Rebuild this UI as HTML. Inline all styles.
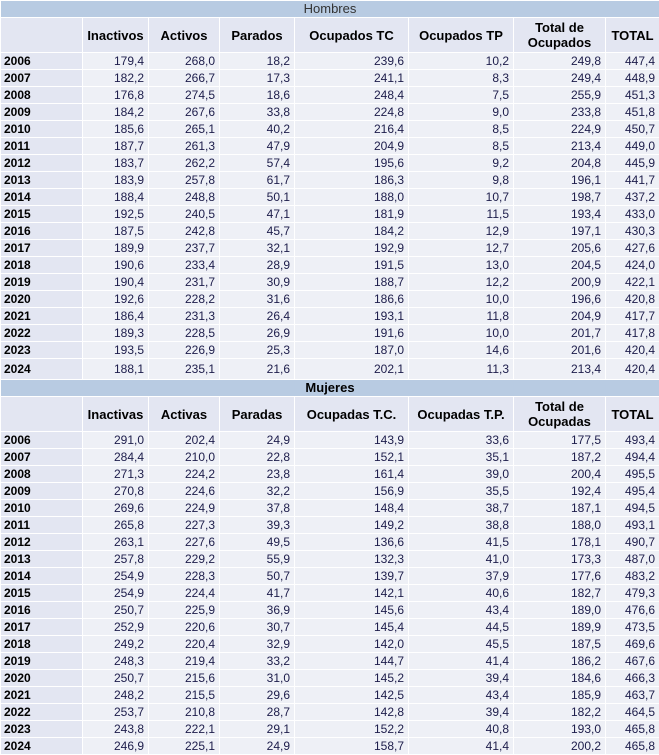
<!DOCTYPE html>
<html><head><meta charset="utf-8"><style>
body{margin:0;width:659px;height:755px;overflow:hidden;background:#fff;font-family:"Liberation Sans",Arial,sans-serif;font-size:12px}
table{border-collapse:collapse;table-layout:fixed;width:659px}
td{border:1px solid #fff;padding:0 4px 0 2px;height:16px;line-height:15px;background:#eef0f6;color:#1c1c4a;text-align:right;white-space:nowrap;overflow:hidden}
td.y{background:#e3e6f2;text-align:left;font-weight:bold;color:#000;padding-left:3px}
tr.h td{height:34px;background:#e3e6f2;text-align:center;font-weight:bold;color:#000;line-height:15px;padding:0 2px;font-size:13px}
tr.b td{height:16px;background:#b8cbe2;text-align:center;color:#333;padding:0;line-height:16px;font-size:13px}
tr.last td{height:18px;line-height:20px}
</style></head><body>
<table>
<colgroup><col style="width:82px"><col style="width:66px"><col style="width:71px"><col style="width:75px"><col style="width:114px"><col style="width:105px"><col style="width:92px"><col style="width:54px"></colgroup>
<tr class="b"><td colspan="8">Hombres</td></tr>
<tr class="h"><td></td><td>Inactivos</td><td>Activos</td><td>Parados</td><td>Ocupados TC</td><td>Ocupados TP</td><td>Total de<br>Ocupados</td><td>TOTAL</td></tr>
<tr><td class="y">2006</td><td>179,4</td><td>268,0</td><td>18,2</td><td>239,6</td><td>10,2</td><td>249,8</td><td>447,4</td></tr>
<tr><td class="y">2007</td><td>182,2</td><td>266,7</td><td>17,3</td><td>241,1</td><td>8,3</td><td>249,4</td><td>448,9</td></tr>
<tr><td class="y">2008</td><td>176,8</td><td>274,5</td><td>18,6</td><td>248,4</td><td>7,5</td><td>255,9</td><td>451,3</td></tr>
<tr><td class="y">2009</td><td>184,2</td><td>267,6</td><td>33,8</td><td>224,8</td><td>9,0</td><td>233,8</td><td>451,8</td></tr>
<tr><td class="y">2010</td><td>185,6</td><td>265,1</td><td>40,2</td><td>216,4</td><td>8,5</td><td>224,9</td><td>450,7</td></tr>
<tr><td class="y">2011</td><td>187,7</td><td>261,3</td><td>47,9</td><td>204,9</td><td>8,5</td><td>213,4</td><td>449,0</td></tr>
<tr><td class="y">2012</td><td>183,7</td><td>262,2</td><td>57,4</td><td>195,6</td><td>9,2</td><td>204,8</td><td>445,9</td></tr>
<tr><td class="y">2013</td><td>183,9</td><td>257,8</td><td>61,7</td><td>186,3</td><td>9,8</td><td>196,1</td><td>441,7</td></tr>
<tr><td class="y">2014</td><td>188,4</td><td>248,8</td><td>50,1</td><td>188,0</td><td>10,7</td><td>198,7</td><td>437,2</td></tr>
<tr><td class="y">2015</td><td>192,5</td><td>240,5</td><td>47,1</td><td>181,9</td><td>11,5</td><td>193,4</td><td>433,0</td></tr>
<tr><td class="y">2016</td><td>187,5</td><td>242,8</td><td>45,7</td><td>184,2</td><td>12,9</td><td>197,1</td><td>430,3</td></tr>
<tr><td class="y">2017</td><td>189,9</td><td>237,7</td><td>32,1</td><td>192,9</td><td>12,7</td><td>205,6</td><td>427,6</td></tr>
<tr><td class="y">2018</td><td>190,6</td><td>233,4</td><td>28,9</td><td>191,5</td><td>13,0</td><td>204,5</td><td>424,0</td></tr>
<tr><td class="y">2019</td><td>190,4</td><td>231,7</td><td>30,9</td><td>188,7</td><td>12,2</td><td>200,9</td><td>422,1</td></tr>
<tr><td class="y">2020</td><td>192,6</td><td>228,2</td><td>31,6</td><td>186,6</td><td>10,0</td><td>196,6</td><td>420,8</td></tr>
<tr><td class="y">2021</td><td>186,4</td><td>231,3</td><td>26,4</td><td>193,1</td><td>11,8</td><td>204,9</td><td>417,7</td></tr>
<tr><td class="y">2022</td><td>189,3</td><td>228,5</td><td>26,9</td><td>191,6</td><td>10,0</td><td>201,7</td><td>417,8</td></tr>
<tr><td class="y">2023</td><td>193,5</td><td>226,9</td><td>25,3</td><td>187,0</td><td>14,6</td><td>201,6</td><td>420,4</td></tr>
<tr class="last"><td class="y">2024</td><td>188,1</td><td>235,1</td><td>21,6</td><td>202,1</td><td>11,3</td><td>213,4</td><td>420,4</td></tr>
<tr class="b"><td colspan="8" style="font-weight:bold;color:#000">Mujeres</td></tr>
<tr class="h"><td></td><td>Inactivas</td><td>Activas</td><td>Paradas</td><td>Ocupadas T.C.</td><td>Ocupadas T.P.</td><td>Total de<br>Ocupadas</td><td>TOTAL</td></tr>
<tr><td class="y">2006</td><td>291,0</td><td>202,4</td><td>24,9</td><td>143,9</td><td>33,6</td><td>177,5</td><td>493,4</td></tr>
<tr><td class="y">2007</td><td>284,4</td><td>210,0</td><td>22,8</td><td>152,1</td><td>35,1</td><td>187,2</td><td>494,4</td></tr>
<tr><td class="y">2008</td><td>271,3</td><td>224,2</td><td>23,8</td><td>161,4</td><td>39,0</td><td>200,4</td><td>495,5</td></tr>
<tr><td class="y">2009</td><td>270,8</td><td>224,6</td><td>32,2</td><td>156,9</td><td>35,5</td><td>192,4</td><td>495,4</td></tr>
<tr><td class="y">2010</td><td>269,6</td><td>224,9</td><td>37,8</td><td>148,4</td><td>38,7</td><td>187,1</td><td>494,5</td></tr>
<tr><td class="y">2011</td><td>265,8</td><td>227,3</td><td>39,3</td><td>149,2</td><td>38,8</td><td>188,0</td><td>493,1</td></tr>
<tr><td class="y">2012</td><td>263,1</td><td>227,6</td><td>49,5</td><td>136,6</td><td>41,5</td><td>178,1</td><td>490,7</td></tr>
<tr><td class="y">2013</td><td>257,8</td><td>229,2</td><td>55,9</td><td>132,3</td><td>41,0</td><td>173,3</td><td>487,0</td></tr>
<tr><td class="y">2014</td><td>254,9</td><td>228,3</td><td>50,7</td><td>139,7</td><td>37,9</td><td>177,6</td><td>483,2</td></tr>
<tr><td class="y">2015</td><td>254,9</td><td>224,4</td><td>41,7</td><td>142,1</td><td>40,6</td><td>182,7</td><td>479,3</td></tr>
<tr><td class="y">2016</td><td>250,7</td><td>225,9</td><td>36,9</td><td>145,6</td><td>43,4</td><td>189,0</td><td>476,6</td></tr>
<tr><td class="y">2017</td><td>252,9</td><td>220,6</td><td>30,7</td><td>145,4</td><td>44,5</td><td>189,9</td><td>473,5</td></tr>
<tr><td class="y">2018</td><td>249,2</td><td>220,4</td><td>32,9</td><td>142,0</td><td>45,5</td><td>187,5</td><td>469,6</td></tr>
<tr><td class="y">2019</td><td>248,3</td><td>219,4</td><td>33,2</td><td>144,7</td><td>41,4</td><td>186,2</td><td>467,6</td></tr>
<tr><td class="y">2020</td><td>250,7</td><td>215,6</td><td>31,0</td><td>145,2</td><td>39,4</td><td>184,6</td><td>466,3</td></tr>
<tr><td class="y">2021</td><td>248,2</td><td>215,5</td><td>29,6</td><td>142,5</td><td>43,4</td><td>185,9</td><td>463,7</td></tr>
<tr><td class="y">2022</td><td>253,7</td><td>210,8</td><td>28,7</td><td>142,8</td><td>39,4</td><td>182,2</td><td>464,5</td></tr>
<tr><td class="y">2023</td><td>243,8</td><td>222,1</td><td>29,1</td><td>152,2</td><td>40,8</td><td>193,0</td><td>465,8</td></tr>
<tr><td class="y">2024</td><td>246,9</td><td>225,1</td><td>24,9</td><td>158,7</td><td>41,4</td><td>200,2</td><td>465,8</td></tr>
</table>
</body></html>
